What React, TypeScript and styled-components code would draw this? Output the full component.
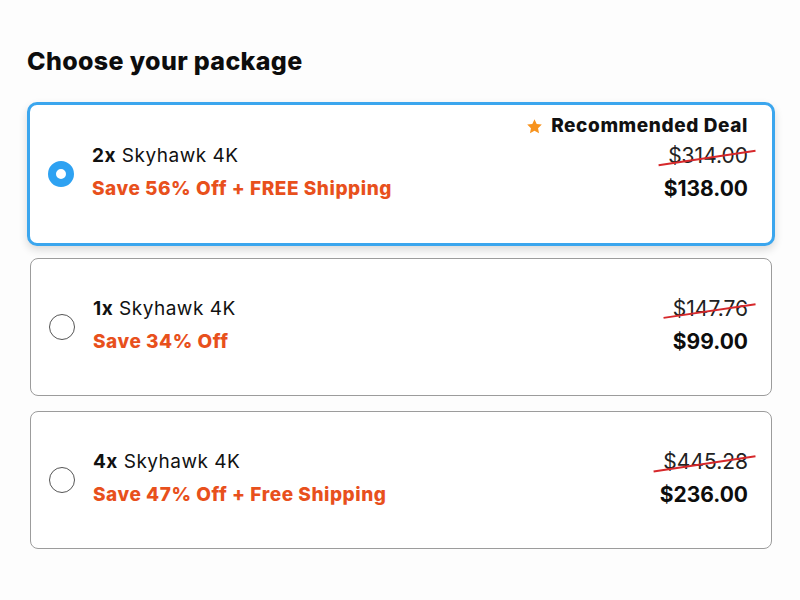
import React, { useState } from "react";
import styled, { createGlobalStyle, css } from "styled-components";

const GlobalStyle = createGlobalStyle`
  html, body {
    margin: 0;
    padding: 0;
    background: #fdfdfd;
  }
  body {
    font-family: "Inter", "Liberation Sans", sans-serif;
    color: #111;
  }
`;

const Page = styled.div`
  width: 800px;
  height: 600px;
  box-sizing: border-box;
  padding: 44px 28px 0 30px;
`;

const Title = styled.h1`
  margin: 0 0 27px -3px;
  font-size: 25px;
  font-weight: 800;
  letter-spacing: 0.35px;
  line-height: 34px;
  color: #0d0d0d;
`;

const List = styled.div`
  display: flex;
  flex-direction: column;
  gap: 15px;
`;

const Card = styled.label<{ $selected: boolean }>`
  position: relative;
  display: flex;
  align-items: center;
  box-sizing: border-box;
  height: 138px;
  padding: 0 23px 0 18px;
  background: #fff;
  border: 1px solid #9c9c9c;
  border-radius: 8px;
  cursor: pointer;
  ${(p) =>
    p.$selected &&
    css`
      margin: -3px;
      height: 144px;
      padding: 0 24px 0 18px;
      border: 3px solid #3ba6ee;
      border-radius: 10px;
      box-shadow: 0 4px 8px rgba(0, 0, 0, 0.14);
    `}
`;

const Radio = styled.span<{ $selected: boolean }>`
  flex: none;
  width: 26px;
  height: 26px;
  box-sizing: border-box;
  border-radius: 50%;
  background: #fff;
  border: 1px solid #555;
  margin-right: 18px;
  ${(p) =>
    p.$selected &&
    css`
      border: 8px solid #2ea2f2;
    `}
`;

const Info = styled.div`
  flex: 1;
  display: flex;
  flex-direction: column;
  gap: 8px;
  margin-top: -4px;
`;

const Name = styled.div`
  font-size: 19px;
  font-weight: 400;
  line-height: 25px;
  letter-spacing: 0.5px;
  color: #111;
  b {
    font-weight: 700;
  }
`;

const Save = styled.div`
  font-size: 19px;
  font-weight: 800;
  line-height: 25px;
  color: #e8501c;
  letter-spacing: 0.55px;
`;

const Prices = styled.div`
  display: flex;
  flex-direction: column;
  align-items: flex-end;
  gap: 8px;
  margin-top: -4px;
`;

const OldPrice = styled.div`
  position: relative;
  font-size: 21px;
  font-weight: 400;
  line-height: 25px;
  color: #222;
  &::after {
    content: "";
    position: absolute;
    left: -10px;
    right: -8px;
    top: 55%;
    height: 1.5px;
    background: #d6282b;
    transform: rotate(-8.5deg);
  }
`;

const NewPrice = styled.div`
  font-size: 21px;
  font-weight: 700;
  line-height: 25px;
  color: #0d0d0d;
`;

const Badge = styled.div`
  position: absolute;
  top: 9px;
  right: 24px;
  display: flex;
  align-items: center;
  gap: 8px;
  font-size: 19px;
  font-weight: 800;
  line-height: 24px;
  letter-spacing: 0.6px;
  color: #111;
`;

const Star = () => (
  <svg width="17" height="17" viewBox="0 0 24 24" aria-hidden="true">
    <path
      d="M12 1.8l3.1 6.6 7.2.9-5.3 5 1.4 7.1L12 17.9l-6.4 3.5 1.4-7.1-5.3-5 7.2-.9z"
      fill="#f7931e"
    />
  </svg>
);

type Pkg = {
  qty: string;
  save: string;
  old: string;
  price: string;
  recommended?: boolean;
};

const packages: Pkg[] = [
  { qty: "2x", save: "Save 56% Off + FREE Shipping", old: "$314.00", price: "$138.00", recommended: true },
  { qty: "1x", save: "Save 34% Off", old: "$147.76", price: "$99.00" },
  { qty: "4x", save: "Save 47% Off + Free Shipping", old: "$445.28", price: "$236.00" },
];

export default function App() {
  const [selected, setSelected] = useState(0);
  return (
    <>
      <GlobalStyle />
      <Page>
        <Title>Choose your package</Title>
        <List>
          {packages.map((p, i) => (
            <Card key={p.qty} $selected={selected === i} onClick={() => setSelected(i)}>
              {p.recommended && (
                <Badge>
                  <Star />
                  Recommended Deal
                </Badge>
              )}
              <Radio $selected={selected === i} />
              <Info>
                <Name>
                  <b>{p.qty}</b> Skyhawk 4K
                </Name>
                <Save>{p.save}</Save>
              </Info>
              <Prices>
                <OldPrice>{p.old}</OldPrice>
                <NewPrice>{p.price}</NewPrice>
              </Prices>
            </Card>
          ))}
        </List>
      </Page>
    </>
  );
}
